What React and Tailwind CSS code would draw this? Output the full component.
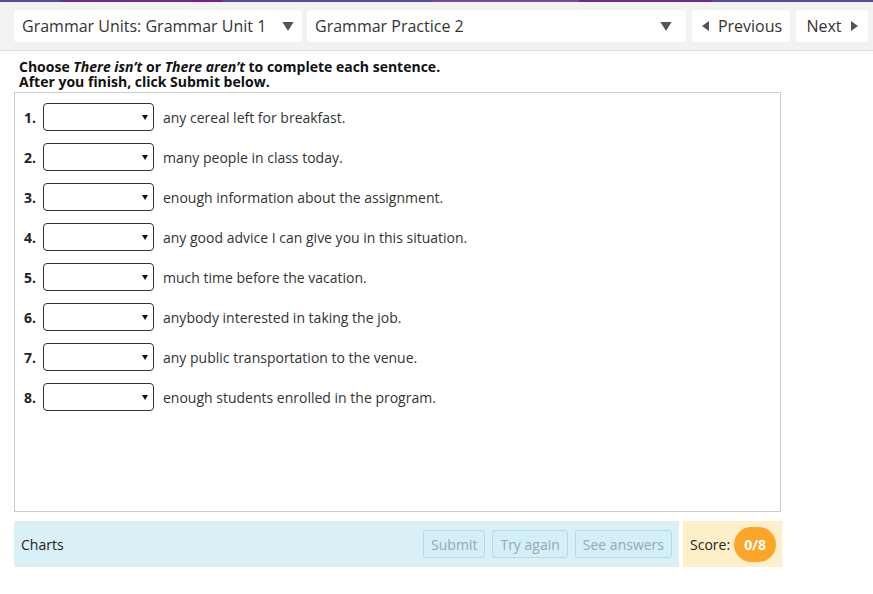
import { useState } from 'react';

const items = [
  'any cereal left for breakfast.',
  'many people in class today.',
  'enough information about the assignment.',
  'any good advice I can give you in this situation.',
  'much time before the vacation.',
  'anybody interested in taking the job.',
  'any public transportation to the venue.',
  'enough students enrolled in the program.',
];

const Caret = ({ className }) => (
  <svg viewBox="0 0 10 8" className={className}>
    <path d="M0 0 L10 0 L5 8 Z" fill="currentColor" />
  </svg>
);

const App = () => {
  const [answers, setAnswers] = useState(items.map(() => ''));

  return (
    <div className="w-[873px] h-[594px] bg-white font-['Open_Sans',sans-serif] text-[#222]">
      {/* Top strip */}
      <div className="flex h-[2px]">
        <div className="w-[61px] bg-[#5b4a9c]" />
        <div className="w-[128px] bg-[#6a2d8e]" />
        <div className="w-[33px] bg-[#7a1f86]" />
        <div className="w-[210px] bg-[#5b4a9c]" />
        <div className="w-[147px] bg-[#7b4a9a]" />
        <div className="w-[133px] bg-[#6a2d8e]" />
        <div className="flex-1 bg-[#5b4a9c]" />
      </div>

      {/* Header */}
      <div className="h-[49px] bg-[#f2f2f2] border-b border-[#dcdcdc] flex items-start pt-2 pl-[14px] gap-[5px]">
        <div className="w-[288px] h-[32px] bg-white rounded-[3px] flex items-center justify-between pl-[8px] pr-[8px] text-[16px] text-[#333]">
          <span>Grammar Units: Grammar Unit 1</span>
          <Caret className="w-[12px] h-[9px] text-[#555]" />
        </div>
        <div className="w-[379px] h-[32px] bg-white rounded-[3px] flex items-center justify-between pl-[8px] pr-[14px] text-[16px] text-[#333]">
          <span>Grammar Practice 2</span>
          <Caret className="w-[12px] h-[9px] text-[#555]" />
        </div>
        <div className="ml-[1px] w-[98px] h-[32px] bg-white rounded-[3px] flex items-center justify-center gap-[9px] pl-[2px] text-[16px] text-[#333]">
          <svg viewBox="0 0 7 10" className="w-[7px] h-[10px] text-[#555]">
            <path d="M7 0 L7 10 L0 5 Z" fill="currentColor" />
          </svg>
          <span>Previous</span>
        </div>
        <div className="ml-[1px] w-[72px] h-[32px] bg-white rounded-[3px] flex items-center justify-center gap-[9px] text-[16px] text-[#333]">
          <span>Next</span>
          <svg viewBox="0 0 7 10" className="w-[7px] h-[10px] text-[#555]">
            <path d="M0 0 L7 5 L0 10 Z" fill="currentColor" />
          </svg>
        </div>
      </div>

      {/* Instructions */}
      <div className="pl-[19px] pt-[8px] text-[14px] font-bold leading-[15px] text-[#111]">
        <p>
          Choose <em>There isn’t</em> or <em>There aren’t</em> to complete each sentence.
        </p>
        <p>After you finish, click Submit below.</p>
      </div>

      {/* Question box */}
      <div className="ml-[14px] mt-[3px] w-[767px] h-[420px] border border-[#ccc] pt-[10px] pl-[9px]">
        <div className="flex flex-col gap-[12px]">
          {items.map((text, i) => (
            <div key={i} className="flex items-center h-[28px]">
              <span className="w-[19px] text-[14px] font-bold">{i + 1}.</span>
              <div className="relative w-[111px] h-[28px] border border-[#333] rounded-[4px] bg-white">
                <select
                  value={answers[i]}
                  onChange={(e) => {
                    const next = [...answers];
                    next[i] = e.target.value;
                    setAnswers(next);
                  }}
                  className="appearance-none w-full h-full bg-transparent outline-none text-[13px] px-2"
                >
                  <option value=""></option>
                  <option value="isnt">There isn’t</option>
                  <option value="arent">There aren’t</option>
                </select>
                <Caret className="absolute right-[5px] top-[11px] w-[6px] h-[5px] text-[#111] pointer-events-none" />
              </div>
              <span className="ml-[9px] text-[14px] text-[#333]">{text}</span>
            </div>
          ))}
        </div>
      </div>

      {/* Footer */}
      <div className="ml-[14px] mt-[9px] flex h-[46px] gap-[4px] w-[768px]">
        <div className="flex-1 bg-[#d9f0f6] flex items-center justify-between pl-[7px] pr-[7px]">
          <span className="text-[14px] text-[#222]">Charts</span>
          <div className="flex gap-[7px]">
            <button className="h-[28px] px-[7px] border border-[#b5dbe8] rounded-[3px] bg-[#d3eff9] text-[14px] text-[#9aa8ae]">Submit</button>
            <button className="h-[28px] px-[7px] border border-[#b5dbe8] rounded-[3px] bg-[#d3eff9] text-[14px] text-[#9aa8ae]">Try again</button>
            <button className="h-[28px] px-[7px] border border-[#b5dbe8] rounded-[3px] bg-[#d3eff9] text-[14px] text-[#9aa8ae]">See answers</button>
          </div>
        </div>
        <div className="w-[99px] bg-[#fdefc9] flex items-center pl-[7px] gap-[4px]">
          <span className="text-[14px] text-[#222]">Score:</span>
          <span className="w-[42px] h-[35px] rounded-full bg-[#fba628] text-white text-[14px] font-bold flex items-center justify-center">0/8</span>
        </div>
      </div>
    </div>
  );
};

export default App;
